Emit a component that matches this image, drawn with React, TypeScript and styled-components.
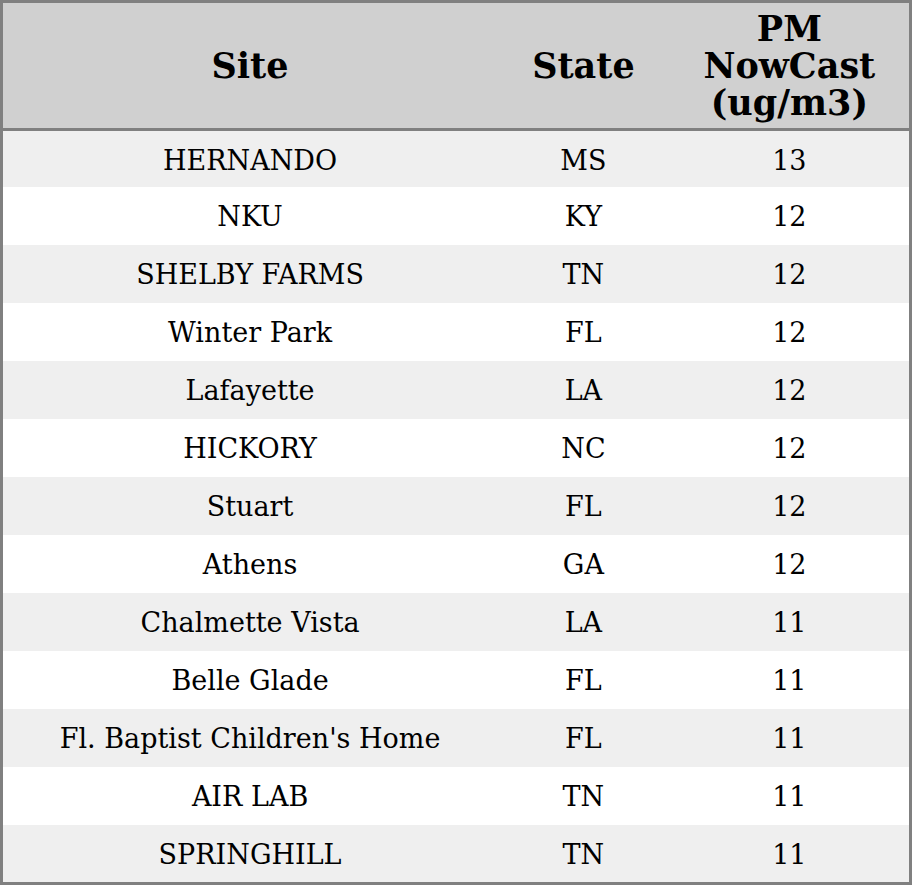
import { createGlobalStyle, styled } from 'styled-components'

interface SiteRow {
  site: string;
  state: string;
  pm: number;
}

const rows: SiteRow[] = [
  { site: 'HERNANDO', state: 'MS', pm: 13 },
  { site: 'NKU', state: 'KY', pm: 12 },
  { site: 'SHELBY FARMS', state: 'TN', pm: 12 },
  { site: 'Winter Park', state: 'FL', pm: 12 },
  { site: 'Lafayette', state: 'LA', pm: 12 },
  { site: 'HICKORY', state: 'NC', pm: 12 },
  { site: 'Stuart', state: 'FL', pm: 12 },
  { site: 'Athens', state: 'GA', pm: 12 },
  { site: 'Chalmette Vista', state: 'LA', pm: 11 },
  { site: 'Belle Glade', state: 'FL', pm: 11 },
  { site: "Fl. Baptist Children's Home", state: 'FL', pm: 11 },
  { site: 'AIR LAB', state: 'TN', pm: 11 },
  { site: 'SPRINGHILL', state: 'TN', pm: 11 },
]

const GlobalStyle = createGlobalStyle`
  html, body {
    margin: 0;
    padding: 0;
    background: #ffffff;
  }
  body {
    font-family: 'DejaVu Serif', serif;
    color: #000;
  }
`

export default function App() {
  return (
    <>
      <GlobalStyle />
      <Table>
        <colgroup>
          <col style={{ width: 494 }} />
          <col style={{ width: 172 }} />
          <col style={{ width: 240 }} />
        </colgroup>
        <thead>
          <tr>
            <HeadCell>Site</HeadCell>
            <HeadCell>State</HeadCell>
            <HeadCell>
              PM
              <br />
              NowCast
              <br />
              (ug/m3)
            </HeadCell>
          </tr>
        </thead>
        <tbody>
          {rows.map((row, i) => (
            <BodyRow key={row.site} $shaded={i % 2 === 0}>
              <Cell>{row.site}</Cell>
              <Cell>{row.state}</Cell>
              <Cell>{row.pm}</Cell>
            </BodyRow>
          ))}
        </tbody>
      </Table>
    </>
  )
}

const Table = styled.table`
  width: 912px;
  border-collapse: collapse;
  table-layout: fixed;
  border: 3px solid #808080;
  font-family: 'DejaVu Serif', serif;
`

const HeadCell = styled.th`
  height: 125px;
  padding: 0;
  background: #d0d0d0;
  border-bottom: 3px solid #808080;
  font-size: 35px;
  font-weight: bold;
  line-height: 37px;
  text-align: center;
  vertical-align: middle;
`

const BodyRow = styled.tr<{ $shaded: boolean }>`
  background: ${(p) => (p.$shaded ? '#efefef' : '#ffffff')};

  &:first-child td {
    height: 53px;
    padding-top: 3px;
  }
  &:last-child td {
    height: 55px;
  }
`

const Cell = styled.td`
  height: 56px;
  padding: 2px 0 0;
  font-size: 27px;
  line-height: 30px;
  text-align: center;
  vertical-align: middle;
`
